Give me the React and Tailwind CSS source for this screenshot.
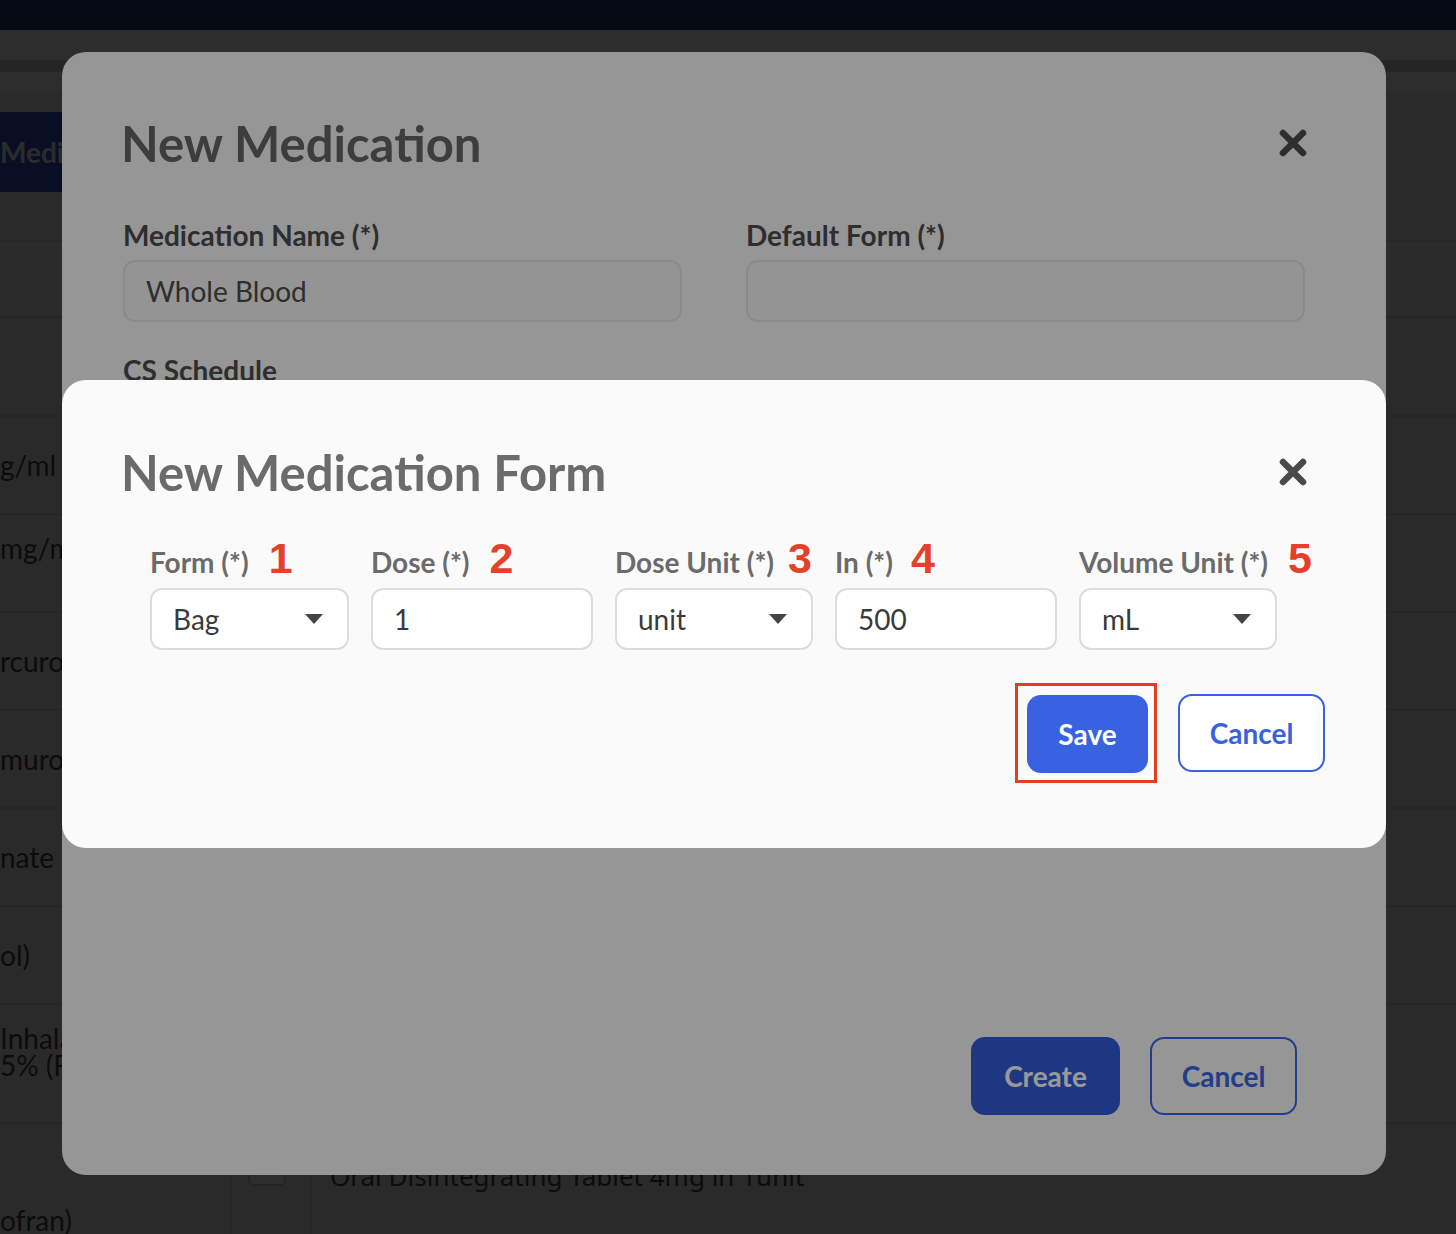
import React from "react";

// first column of the table is scrolled off to the left, only the tail of each name shows
const rows = [
  { name: "g/ml (" },
  { name: "mg/m", top: true },
  { name: "rcuro" },
  { name: "muro" },
  { name: "nate" },
  { name: "ol)" },
  { name: "Inhala", sub: "5% (F", top: true },
];

const CloseIcon = ({ color, className = "" }) => (
  <svg width="30" height="30" viewBox="0 0 30 30" className={className}>
    <path
      d="M5 5 L25 25 M25 5 L5 25"
      stroke={color}
      strokeWidth="6.5"
      strokeLinecap="round"
      fill="none"
    />
  </svg>
);

const Caret = () => (
  <svg width="18" height="10" viewBox="0 0 18 10">
    <path d="M0 0 H18 L9 10 Z" fill="#444444" />
  </svg>
);

const BackPage = () => (
  <div className="h-full bg-[#efefef] font-[Lato,sans-serif] text-[28px] text-[#474747]">
    <div className="h-[30px] bg-[#1c386f]" />
    <div className="h-[30px] bg-white" />
    <div className="h-[12px] bg-[#d4d4d4]" />
    <div className="h-[20px] bg-white" />
    <div className="pt-[20px] pb-[48px]">
      <div className="flex h-[80px] w-[320px] items-center bg-[#2f55c8] text-[28px] font-bold text-[#f2f2f2]">
        Medi
      </div>
    </div>
    <div className="h-[78px] border-y-2 border-[#d6d6d6] bg-[#f6f6f6]" />

    {/* medication table */}
    <div className="h-[99px] border-b-2 border-[#d6d6d6]" />
    {rows.map((r, i) => (
      <div
        key={i}
        className={`flex border-b-2 border-[#d6d6d6] ${
          r.sub ? "h-[119px]" : "h-[98px]"
        }`}
      >
        <div
          className={`flex w-[230px] flex-col leading-[34px] whitespace-nowrap ${
            r.top ? "pt-[16px]" : "justify-center"
          }`}
        >
          <span>{r.name}</span>
          {r.sub && <span className="-mt-[7px]">{r.sub}</span>}
        </div>
        <div className="w-[82px] border-x-2 border-[#e2e2e2]" />
        <div className="flex-1" />
      </div>
    ))}
    <div className="flex h-[200px]">
      <div className="flex w-[230px] items-center pb-[8px] whitespace-nowrap">
        ofran)
      </div>
      <div className="w-[82px] border-x-2 border-[#e2e2e2] pl-[16px] pt-[22px]">
        <div className="h-[40px] w-[38px] rounded-[6px] border-2 border-[#c9c9c9] bg-white" />
      </div>
      <div className="pl-[18px] pt-[34px] font-['Noto_Sans',sans-serif] text-[26px] leading-[36px]">
        Oral Disintegrating Tablet 4mg in 1unit
      </div>
    </div>
  </div>
);

const Field = ({ label, value, width, select, mark, gap = "ml-[20px]" }) => (
  <div className={width}>
    <div className="flex h-[32px] items-baseline whitespace-nowrap">
      <span className="text-[28px] font-bold leading-[32px] text-[#6b6b6b]">
        {label}
      </span>
      <span
        className={`${gap} font-['Liberation_Sans',Arial,sans-serif] text-[43px] font-bold leading-[32px] text-[#e5402a]`}
      >
        {mark}
      </span>
    </div>
    <div className="mt-[14px] flex h-[62px] items-center justify-between rounded-[12px] border-2 border-[#dcdcdc] bg-white pl-[21px] pr-[24px] text-[28px] text-[#3a3a3a]">
      <span>{value}</span>
      {select && <Caret />}
    </div>
  </div>
);

export default function App() {
  return (
    <div className="relative h-[1234px] w-full overflow-hidden font-[Lato,sans-serif]">
      <BackPage />

      {/* New Medication dialog */}
      <div className="absolute inset-0 bg-black/70">
        <div className="absolute left-[62px] top-[52px] flex h-[1123px] w-[1324px] flex-col rounded-[24px] bg-[#fafafa] px-[61px] pt-[62px] pb-[60px]">
          <div className="flex items-center justify-between">
            <h2 className="-ml-[2px] text-[49px] font-bold leading-[58px] text-[#676767]">
              New Medication
            </h2>
            <CloseIcon color="#4e4e4e" className="mr-[17px]" />
          </div>

          <div className="mt-[47px] grid grid-cols-2 gap-x-[64px] pr-[20px]">
            <div>
              <div className="text-[28px] font-bold leading-[32px] text-[#4d4d4d]">
                Medication Name (*)
              </div>
              <div className="mt-[9px] flex h-[62px] items-center rounded-[12px] border-2 border-[#e6e6e6] bg-[#f7f7f7] px-[21px] text-[28px] text-[#4d4d4d]">
                Whole Blood
              </div>
            </div>
            <div>
              <div className="text-[28px] font-bold leading-[32px] text-[#4d4d4d]">
                Default Form (*)
              </div>
              <div className="mt-[9px] h-[62px] rounded-[12px] border-2 border-[#e6e6e6] bg-[#f7f7f7]" />
            </div>
          </div>

          <div className="mt-[32px] text-[28px] font-bold leading-[32px] text-[#4d4d4d]">
            CS Schedule
          </div>
          <div className="mt-[9px] h-[62px] w-[559px] rounded-[12px] border-2 border-[#e6e6e6] bg-[#f7f7f7]" />

          <div className="mt-auto flex justify-end gap-[30px] pr-[28px]">
            <button className="h-[78px] w-[149px] rounded-[14px] bg-[#345cda] text-[28px] font-bold text-white">
              Create
            </button>
            <button className="h-[78px] w-[147px] rounded-[14px] border-2 border-[#3a66e6] text-[28px] font-bold text-[#3a66e6]">
              Cancel
            </button>
          </div>
        </div>
      </div>

      {/* New Medication Form dialog */}
      <div className="absolute inset-0 bg-black/40">
        <div className="absolute left-[62px] top-[380px] w-[1324px] rounded-[24px] bg-[#fafafa] px-[61px] pt-[63px] pb-[65px]">
          <div className="flex items-center justify-between">
            <h2 className="-ml-[2px] text-[49px] font-bold leading-[58px] text-[#6b6b6b]">
              New Medication Form
            </h2>
            <CloseIcon color="#4a4a4a" className="mr-[17px]" />
          </div>

          <div className="mt-[41px] flex gap-[22px] pl-[27px]">
            <Field label="Form (*)" mark="1" value="Bag" width="w-[199px]" select />
            <Field label="Dose (*)" mark="2" value="1" width="w-[222px]" />
            <Field label="Dose Unit (*)" mark="3" value="unit" width="w-[198px]" gap="ml-[14px]" select />
            <Field label="In (*)" mark="4" value="500" width="w-[222px]" gap="ml-[18px]" />
            <Field label="Volume Unit (*)" mark="5" value="mL" width="w-[198px]" select />
          </div>

          <div className="mt-[33px] flex items-center justify-end gap-[21px]">
            <div className="border-[3px] border-[#e23b26] pt-[9px] pb-[7px] pl-[9px] pr-[6px]">
              <button className="h-[78px] w-[121px] rounded-[14px] bg-[#3862e0] text-[28px] font-bold text-white">
                Save
              </button>
            </div>
            <button className="h-[78px] w-[147px] rounded-[14px] border-2 border-[#3862e0] bg-white text-[28px] font-bold text-[#3862e0]">
              Cancel
            </button>
          </div>
        </div>
      </div>
    </div>
  );
}
